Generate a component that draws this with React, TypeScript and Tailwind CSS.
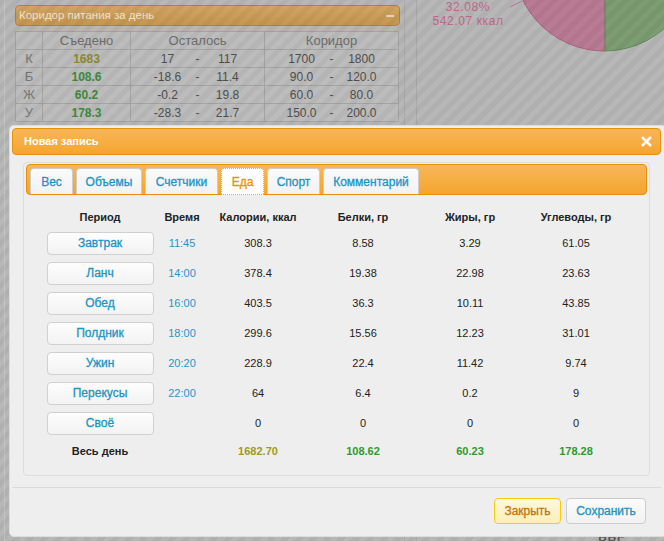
import { X, Minus } from 'lucide-react';

const meals = [
  { name: 'Завтрак', time: '11:45', kcal: '308.3', prot: '8.58', fat: '3.29', carb: '61.05' },
  { name: 'Ланч', time: '14:00', kcal: '378.4', prot: '19.38', fat: '22.98', carb: '23.63' },
  { name: 'Обед', time: '16:00', kcal: '403.5', prot: '36.3', fat: '10.11', carb: '43.85' },
  { name: 'Полдник', time: '18:00', kcal: '299.6', prot: '15.56', fat: '12.23', carb: '31.01' },
  { name: 'Ужин', time: '20:20', kcal: '228.9', prot: '22.4', fat: '11.42', carb: '9.74' },
  { name: 'Перекусы', time: '22:00', kcal: '64', prot: '6.4', fat: '0.2', carb: '9' },
  { name: 'Своё', time: '', kcal: '0', prot: '0', fat: '0', carb: '0' },
];

const tabs = [
  { label: 'Вес', w: 'w-[43px]' },
  { label: 'Объемы', w: 'w-[66px]' },
  { label: 'Счетчики', w: 'w-[73px]' },
  { label: 'Еда', w: 'w-[43px]', active: true },
  { label: 'Спорт', w: 'w-[53px]' },
  { label: 'Комментарий', w: 'w-[96px]' },
];

const corridor = [
  { k: 'К', eaten: '1683', eatenCls: 'text-[#8c8a2c]', left: ['17', '117'], range: ['1700', '1800'] },
  { k: 'Б', eaten: '108.6', eatenCls: 'text-[#3f8a3c]', left: ['-18.6', '11.4'], range: ['90.0', '120.0'] },
  { k: 'Ж', eaten: '60.2', eatenCls: 'text-[#3f8a3c]', left: ['-0.2', '19.8'], range: ['60.0', '80.0'] },
  { k: 'У', eaten: '178.3', eatenCls: 'text-[#3f8a3c]', left: ['-28.3', '21.7'], range: ['150.0', '200.0'] },
];

const cols = 'grid grid-cols-[124px_40px_112px_98px_116px_96px] items-center text-center';

function Pair({ a, b }: { a: string; b: string }) {
  return (
    <div className="flex justify-center">
      <span className="w-[50px] text-center">{a}</span>
      <span className="w-[10px] text-center">-</span>
      <span className="w-[50px] text-center">{b}</span>
    </div>
  );
}

function PageBehind() {
  return (
    <>
      <div className="absolute left-[4px] top-0 h-full w-px bg-[#c4c8c0]" />
      <div className="absolute left-[404px] top-0 h-full w-px bg-[#a9a9a9]" />
      <div className="absolute left-[416px] top-0 h-full w-px bg-[#a9a9a9]" />

      <div className="pl-[15px] pt-[5px] w-[400px]">
        <div className="h-[21px] rounded-[4px] border border-[#b08340] bg-gradient-to-b from-[#d2a462] to-[#c5964f] flex items-center justify-between pl-[3px] pr-[3px] text-[11.5px] text-[#f1e4cf]">
          <span>Коридор питания за день</span>
          <Minus className="w-[12px] h-[12px]" strokeWidth={3} />
        </div>
        <table className="mt-[5px] border-collapse text-[12px] leading-[16px] text-[#4f4f4f] bg-[#bcbcbc]">
          <thead>
            <tr className="h-[18px] text-[13px] text-[#6c6c6c]">
              <th className="w-[27px] p-0 border border-[#a4a4a4] font-normal"></th>
              <th className="w-[88px] p-0 border border-[#a4a4a4] font-normal">Съедено</th>
              <th className="w-[134px] p-0 border border-[#a4a4a4] font-normal">Осталось</th>
              <th className="w-[134px] p-0 border border-[#a4a4a4] font-normal">Коридор</th>
            </tr>
          </thead>
          <tbody>
            {corridor.map((r) => (
              <tr key={r.k} className="h-[18px]">
                <td className="p-0 border border-[#a4a4a4] text-center text-[13px] text-[#777777]">{r.k}</td>
                <td className={`p-0 border border-[#a4a4a4] text-center font-bold ${r.eatenCls}`}>{r.eaten}</td>
                <td className="p-0 border border-[#a4a4a4]"><Pair a={r.left[0]} b={r.left[1]} /></td>
                <td className="p-0 border border-[#a4a4a4]"><Pair a={r.range[0]} b={r.range[1]} /></td>
              </tr>
            ))}
          </tbody>
        </table>
      </div>

      {/* pie chart peeking from the top */}
      <svg className="absolute left-[500px] top-0" width="164" height="60" viewBox="0 0 164 60">
        <path d="M105 -40 L14 -50 A91 91 0 0 0 105 51 Z" fill="#b87b93" stroke="#b0607f" strokeWidth="1" />
        <path d="M105 -40 L105 51 A91 91 0 0 0 190 -71 Z" fill="#7c9c72" stroke="#5f8c55" strokeWidth="1" />
        <path d="M10 7 L22 1" stroke="#c0688c" strokeWidth="1" fill="none" />
      </svg>
      <div className="absolute left-[428px] top-0 w-[80px] flex flex-col items-center text-[12px] leading-[14px] tracking-[0.6px] text-[#c0688c]">
        <span>32.08%</span>
        <span>542.07 ккал</span>
      </div>
      <div className="absolute left-[598px] top-[531px] text-[13px] font-bold text-[#5a5a5a]">ВВГ</div>
    </>
  );
}

export default function App() {
  return (
    <div className="relative w-[664px] h-[541px] overflow-hidden bg-[#b7b7b7] font-['Liberation_Sans',sans-serif]">
      <PageBehind />
      <div className="absolute inset-0 pointer-events-none bg-[repeating-linear-gradient(135deg,rgba(0,0,0,0.04)_0px,rgba(0,0,0,0.04)_5px,transparent_5px,transparent_10px)]" />

      {/* dialog */}
      <div className="absolute left-[9px] top-[125px] w-[658px] h-[412px] rounded-[5px] border border-[#dddddd] bg-[#eeeeee] p-[2px] flex flex-col">
        <div className="h-[27px] rounded-[4px] border border-[#e78f08] bg-gradient-to-b from-[#f8b659] to-[#f4a52a] flex items-center justify-between pl-[11px] pr-[6px] mr-[3px]">
          <span className="text-[11px] font-bold text-white">Новая запись</span>
          <X className="w-[15px] h-[15px] text-white" strokeWidth={4} />
        </div>

        <div className="px-[11px] pt-[7px] mr-[3px]">
          <div className="h-[314px] rounded-[4px] border border-[#dddddd] bg-[#eeeeee] px-[2px] pt-[1px]">
            <div className="h-[31px] rounded-[4px] border border-[#e78f08] bg-gradient-to-b from-[#f8b659] to-[#f4a52a] flex items-end gap-[3px] pl-[3px]">
              {tabs.map((t) => (
                <div
                  key={t.label}
                  className={
                    t.active
                      ? `${t.w} h-[27px] -mb-px rounded-t-[4px] border border-dotted border-[#f0a43a] bg-white flex items-center justify-center text-[12px] text-[#eb8f00] [-webkit-text-stroke:0.3px_currentcolor]`
                      : `${t.w} h-[26px] rounded-t-[4px] border border-b-0 border-[#cccccc] bg-gradient-to-b from-[#fafafa] to-[#f2f2f2] flex items-center justify-center text-[12px] text-[#1c94c4] [-webkit-text-stroke:0.3px_currentcolor]`
                  }
                >
                  {t.label}
                </div>
              ))}
            </div>

            <div className="pl-[12px] pt-[11px] text-[11px] text-[#222222]">
              <div className={`${cols} h-[22px] font-bold`}>
                <span>Период</span>
                <span>Время</span>
                <span>Калории, ккал</span>
                <span>Белки, гр</span>
                <span>Жиры, гр</span>
                <span>Углеводы, гр</span>
              </div>
              {meals.map((m) => (
                <div key={m.name} className={`${cols} h-[30px]`}>
                  <div className="flex justify-center">
                    <div className="w-[107px] h-[23px] rounded-[4px] border border-[#d0d0d0] bg-gradient-to-b from-[#fdfdfd] to-[#f3f3f3] flex items-center justify-center text-[12px] text-[#1c94c4] [-webkit-text-stroke:0.3px_currentcolor]">
                      {m.name}
                    </div>
                  </div>
                  <span className="text-[#2a93c6]">{m.time}</span>
                  <span>{m.kcal}</span>
                  <span>{m.prot}</span>
                  <span>{m.fat}</span>
                  <span>{m.carb}</span>
                </div>
              ))}
              <div className={`${cols} h-[26px] font-bold`}>
                <span>Весь день</span>
                <span></span>
                <span className="text-[#a09a16]">1682.70</span>
                <span className="text-[#2e9a2e]">108.62</span>
                <span className="text-[#2e9a2e]">60.23</span>
                <span className="text-[#2e9a2e]">178.28</span>
              </div>
            </div>
          </div>
        </div>

        <div className="mt-[11px] mr-[3px] border-t border-[#dadada] flex justify-end gap-[5px] pt-[10px] pr-[15px]">
          <button className="w-[67px] h-[26px] rounded-[4px] border border-[#fbcb09] bg-gradient-to-b from-[#fef8dc] to-[#fcefb8] text-[12px] text-[#c77405] [-webkit-text-stroke:0.3px_currentcolor]">
            Закрыть
          </button>
          <button className="w-[80px] h-[26px] rounded-[4px] border border-[#cccccc] bg-gradient-to-b from-[#fbfbfb] to-[#f2f2f2] text-[12px] text-[#1c94c4] [-webkit-text-stroke:0.3px_currentcolor]">
            Сохранить
          </button>
        </div>
      </div>
    </div>
  );
}
